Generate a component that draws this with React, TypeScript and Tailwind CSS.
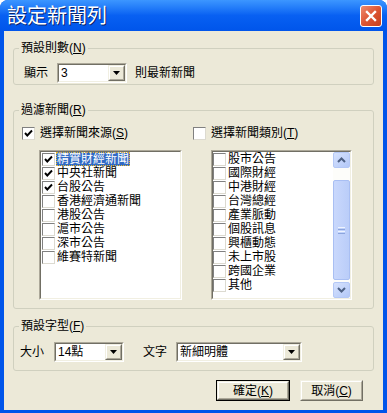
import React from "react";

const FONT = '"Liberation Sans", "Noto Sans CJK TC", sans-serif';

function Sunken({ className = "", innerClassName = "", children }: { className?: string; innerClassName?: string; children?: React.ReactNode }) {
  return (
    <div className={`border border-t-[#ACA899] border-l-[#ACA899] border-b-white border-r-white ${className}`}>
      <div className={`h-full w-full border border-t-[#716F64] border-l-[#716F64] border-b-[#F1EFE2] border-r-[#F1EFE2] ${innerClassName}`}>
        {children}
      </div>
    </div>
  );
}

function Raised({ className = "", innerClassName = "", children }: { className?: string; innerClassName?: string; children?: React.ReactNode }) {
  return (
    <div className={`border border-t-[#F1EFE2] border-l-[#F1EFE2] border-b-[#716F64] border-r-[#716F64] ${className}`}>
      <div className={`h-full w-full border border-t-white border-l-white border-b-[#ACA899] border-r-[#ACA899] bg-[#ECE9D8] ${innerClassName}`}>
        {children}
      </div>
    </div>
  );
}

function Check({ checked }: { checked: boolean }) {
  return (
    <div className="w-[13px] h-[13px] shrink-0 border border-t-[#808080] border-l-[#808080] border-b-[#DCDAD0] border-r-[#DCDAD0] bg-white flex items-center justify-center">
      {checked && (
        <svg width="9" height="9" viewBox="0 0 9 9">
          <polyline points="1,4 3.3,6.5 8,1.5" fill="none" stroke="#000" strokeWidth="1.9" />
        </svg>
      )}
    </div>
  );
}

function Combo({ width, value }: { width: string; value: string }) {
  return (
    <Sunken className={`${width} h-[20px] shrink-0`} innerClassName="flex bg-white">
      <div className="flex-1 flex items-center pl-[2px] text-[12px] leading-[14px] text-black">{value}</div>
      <Raised className="w-[17px] h-full" innerClassName="flex items-center justify-center">
        <svg width="7" height="4" viewBox="0 0 7 4">
          <polygon points="0,0 7,0 3.5,4" fill="#000" />
        </svg>
      </Raised>
    </Sunken>
  );
}

function Group({ label, mn, className = "", children }: { label: string; mn: string; className?: string; children?: React.ReactNode }) {
  return (
    <fieldset className={`border border-[#D0D0BF] rounded-[3px] ${className}`}>
      <legend className="ml-[5px] px-[2px] text-[12px] leading-[14px] text-black">
        {label}(<u>{mn}</u>)
      </legend>
      {children}
    </fieldset>
  );
}

function Item({ label, checked = false, selected = false }: { label: string; checked?: boolean; selected?: boolean }) {
  return (
    <div className="h-[14px] flex items-start">
      <div className="pt-[1px]">
        <Check checked={checked} />
      </div>
      <span
        className={`ml-[1px] px-[1px] text-[12px] leading-[12px] h-[14px] flex items-center whitespace-nowrap ${
          selected ? "bg-[#316AC5] text-white outline outline-1 outline-dotted outline-[#E8B830] -outline-offset-1" : "text-black"
        }`}
      >
        {label}
      </span>
    </div>
  );
}

function ScrollBtn({ up }: { up: boolean }) {
  return (
    <div className="h-[16px] w-full rounded-[2px] border border-[#B4C8F6] bg-gradient-to-br from-[#D6E2FD] to-[#B3C8F8] flex items-center justify-center">
      <svg width="9" height="6" viewBox="0 0 9 6">
        <polyline points={up ? "1,5 4.5,1.5 8,5" : "1,1 4.5,4.5 8,1"} fill="none" stroke="#4D6185" strokeWidth="2" />
      </svg>
    </div>
  );
}

export default function App() {
  const left = [
    { l: "精實財經新聞", c: true, s: true },
    { l: "中央社新聞", c: true },
    { l: "台股公告", c: true },
    { l: "香港經濟通新聞" },
    { l: "港股公告" },
    { l: "滬市公告" },
    { l: "深市公告" },
    { l: "維賽特新聞" },
  ];
  const right = ["股市公告", "國際財經", "中港財經", "台灣總經", "產業脈動", "個股訊息", "興櫃動態", "未上市股", "跨國企業", "其他"];

  return (
    <div className="w-[387px] h-[413px] flex flex-col bg-[#0055EA] rounded-t-[8px] overflow-hidden" style={{ fontFamily: FONT }}>
      {/* Title bar */}
      <div className="h-[31px] shrink-0 flex items-center justify-between pl-[7px] pr-[5px] bg-gradient-to-b from-[#3C96FF] via-[#0860F2] to-[#0055EA]">
        <span className="text-white text-[20px] leading-[22px] [text-shadow:1px_1px_0_#0A246A]">設定新聞列</span>
        <div className="w-[22px] h-[22px] rounded-[3px] border border-white bg-gradient-to-br from-[#EE8A6E] via-[#DD5533] to-[#C5401C] flex items-center justify-center">
          <svg width="12" height="12" viewBox="0 0 12 12">
            <path d="M2 2 L10 10 M10 2 L2 10" stroke="#fff" strokeWidth="2.4" strokeLinecap="square" />
          </svg>
        </div>
      </div>

      {/* Body */}
      <div className="flex-1 mx-[4px] mb-[3px] bg-[#ECE9D8] flex flex-col px-[9px] pt-[10px] text-black">
        {/* Group 1 */}
        <Group label="預設則數" mn="N">
          <div className="h-[29px] pt-[8px] pl-[10px] flex items-start">
            <span className="text-[12px] leading-[20px]">顯示</span>
            <div className="ml-[9px]">
              <Combo width="w-[70px]" value="3" />
            </div>
            <span className="ml-[8px] text-[12px] leading-[20px]">則最新新聞</span>
          </div>
        </Group>

        {/* Group 2 */}
        <Group label="過濾新聞" mn="R" className="mt-[18px]">
          <div className="pt-[9px] pb-[8px] pl-[8px] grid grid-cols-[171px_1fr]">
            <div className="flex flex-col">
              <div className="h-[14px] flex items-center gap-[5px]">
                <Check checked={true} />
                <span className="text-[12px] leading-[14px]">
                  選擇新聞來源(<u>S</u>)
                </span>
              </div>
              <Sunken className="ml-[17px] mt-[10px] w-[143px] h-[150px]" innerClassName="bg-white pl-[1px]">
                {left.map((it) => (
                  <Item key={it.l} label={it.l} checked={!!it.c} selected={!!it.s} />
                ))}
              </Sunken>
            </div>
            <div className="flex flex-col">
              <div className="h-[14px] flex items-center gap-[5px]">
                <Check checked={false} />
                <span className="text-[12px] leading-[14px]">
                  選擇新聞類別(<u>T</u>)
                </span>
              </div>
              <Sunken className="ml-[18px] mt-[10px] w-[141px] h-[150px]" innerClassName="bg-white flex">
                <div className="flex-1">
                  {right.map((l) => (
                    <Item key={l} label={l} />
                  ))}
                </div>
                <div className="w-[17px] h-full flex flex-col bg-[#FDFDFA]">
                  <ScrollBtn up={true} />
                  <div className="h-[12px]" />
                  <div className="flex-1 mb-[2px] rounded-[2px] border border-[#A9BFF3] bg-gradient-to-r from-[#C9D8FC] to-[#BACDF9] flex items-center justify-center">
                    <div className="flex flex-col gap-[1px]">
                      <div className="w-[7px] h-[1px] bg-[#EEF4FE]" />
                      <div className="w-[7px] h-[1px] bg-[#8CA5DD]" />
                      <div className="w-[7px] h-[1px] bg-[#EEF4FE]" />
                      <div className="w-[7px] h-[1px] bg-[#8CA5DD]" />
                    </div>
                  </div>
                  <ScrollBtn up={false} />
                </div>
              </Sunken>
            </div>
          </div>
        </Group>

        {/* Group 3 */}
        <Group label="預設字型" mn="F" className="mt-[10px]">
          <div className="h-[37px] pt-[9px] pl-[6px] flex items-start">
            <span className="text-[12px] leading-[20px]">大小</span>
            <div className="ml-[10px]">
              <Combo width="w-[70px]" value="14點" />
            </div>
            <span className="ml-[19px] text-[12px] leading-[20px]">文字</span>
            <div className="ml-[9px]">
              <Combo width="w-[126px]" value="新細明體" />
            </div>
          </div>
        </Group>

        {/* Buttons */}
        <div className="mt-[9px] flex justify-end gap-[10px] mr-[11px]">
          <div className="border border-black">
            <Raised className="w-[72px] h-[19px]" innerClassName="flex items-center justify-center">
              <span className="text-[12px] leading-[14px]">
                確定(<u>K</u>)
              </span>
            </Raised>
          </div>
          <Raised className="w-[63px] h-[21px]" innerClassName="flex items-center justify-center">
            <span className="text-[12px] leading-[14px]">
              取消(<u>C</u>)
            </span>
          </Raised>
        </div>
      </div>
    </div>
  );
}
